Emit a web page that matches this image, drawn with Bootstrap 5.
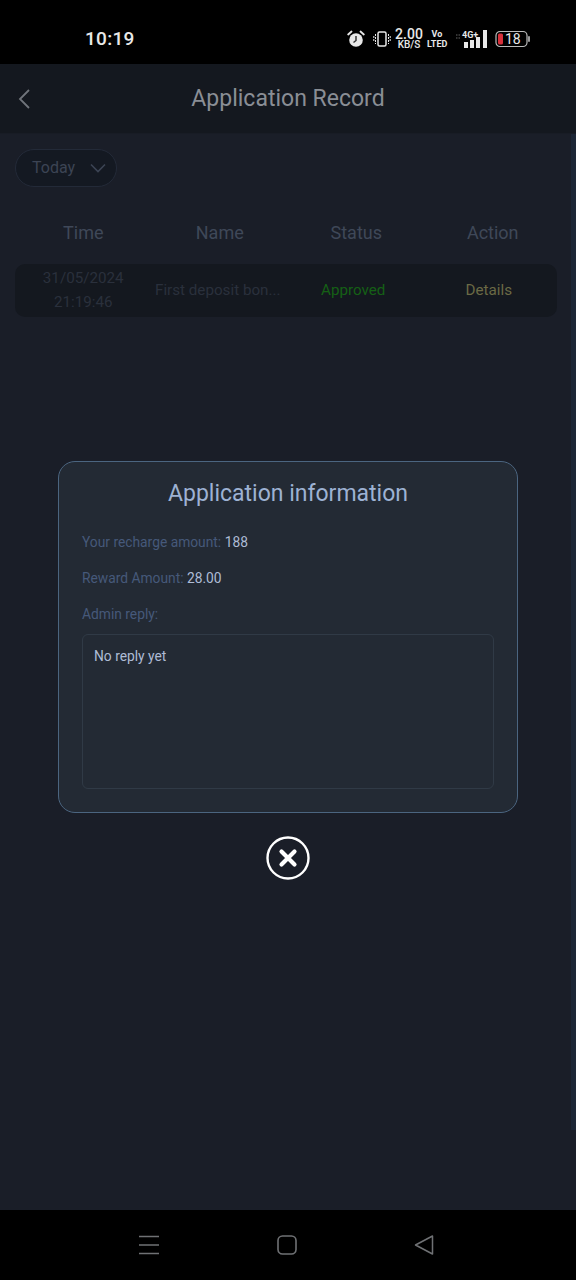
<!DOCTYPE html>
<html lang="en">
<head>
  <meta charset="UTF-8">
  <title>Application Record</title>
  <meta name="viewport" content="width=device-width, initial-scale=1">
  <link href="https://cdn.jsdelivr.net/npm/bootstrap@5.3.3/dist/css/bootstrap.min.css" rel="stylesheet">
  <style>
    body {
      font-family: Roboto, "Liberation Sans", sans-serif;
      background-color: #1a1e28;
      width: 576px;
      height: 1280px;
      overflow: hidden;
    }

    .phone-page {
      height: 1280px;
      position: relative;
    }

    .status-bar {
      height: 64px;
      background-color: #000;
      color: #e8e8e8;
      padding: 14px 45px 0 85px;
    }

    .status-time {
      font-size: 19px;
      font-weight: 500;
      letter-spacing: .3px;
    }

    .alarm-icon {
      margin-right: 8px;
    }

    .status-speed {
      width: 28px;
      margin: 0 4px;
      font-size: 14px;
      line-height: 11px;
      font-weight: 500;
      text-align: center;
      white-space: nowrap;
    }

    .status-speed span {
      display: block;
      font-size: 10px;
      line-height: 10px;
    }

    .status-volte {
      width: 20px;
      margin-right: 9px;
      font-size: 9px;
      line-height: 10px;
      font-weight: 700;
      text-align: center;
      white-space: nowrap;
    }

    .signal-icon {
      margin-right: 8px;
    }

    .app-header {
      height: 70px;
      background-color: #14181f;
      border-bottom: 1px solid #181c25;
      padding: 0 17px;
    }

    .app-title {
      flex: 1;
      text-align: center;
      color: #8a8e95;
      font-size: 23px;
      margin: 0 0 0 -14px;
      font-weight: 400;
    }

    .record-main {
      flex: 1;
      padding: 15px 19px 0 15px;
      position: relative;
    }

    .scroll-strip {
      position: absolute;
      top: 0;
      right: 0;
      width: 5px;
      height: 996px;
      background-color: #1c2636;
    }

    .date-pill {
      width: 102px;
      height: 38px;
      border: 1px solid #232a38;
      border-radius: 19px;
      background-color: #141922;
      color: #3c4454;
      font-size: 16px;
      padding-left: 16px;
      gap: 14px;
    }

    .head-row {
      margin: 19px 0 6px;
      height: 52px;
      color: #3f4858;
      font-size: 18px;
    }

    .cell-col {
      flex: none;
      width: 136.5px;
      text-align: center;
    }

    .data-row {
      height: 53px;
      padding-bottom: 2px;
      background-color: #14181f;
      border-radius: 10px;
      font-size: 15.2px;
      line-height: 24px;
    }

    .cell-time { color: #2a303c; }
    .cell-name { color: #2a303c; margin-left: -2px; }
    .cell-ok { color: #156015; margin-left: -1px; }
    .cell-link { color: #6b6a45; margin-left: -1px; }

    .info-dialog {
      position: absolute;
      left: 58px;
      top: 461px;
      width: 460px;
      height: 352px;
      background-color: #232a34;
      border: 1.5px solid #4b6580;
      border-radius: 17px;
      padding: 16px 23px 0;
    }

    .dialog-title {
      color: #9db2d3;
      font-size: 23px;
      font-weight: 400;
      text-align: center;
      line-height: 32px;
      margin-bottom: 22px;
    }

    .info-line {
      font-size: 13.8px;
      line-height: 20px;
      margin-bottom: 16px;
      color: #46597a;
    }

    .info-line b {
      font-weight: 400;
      color: #aebcd6;
    }

    .reply-box {
      height: 155px;
      margin-top: -6px;
      border: 1px solid #303a46;
      border-radius: 6px;
      padding: 11px;
      font-size: 13.8px;
      line-height: 20px;
      color: #aebcd6;
    }

    .dialog-close {
      position: absolute;
      left: 266px;
      top: 836px;
      width: 44px;
      height: 44px;
      padding: 0;
      background: none;
      border: 0;
    }

    .nav-bar {
      height: 70px;
      background-color: #000;
    }
  </style>
</head>
<body>

<div class="phone-page d-flex flex-column">

  <!-- Status bar -->
  <div class="status-bar d-flex align-items-center justify-content-between">
    <div class="status-time">10:19</div>
    <div class="d-flex align-items-center">
      <svg class="alarm-icon" width="18" height="18" viewBox="0 0 18 18">
        <circle cx="9" cy="10" r="6.8" fill="#e8e8e8"/>
        <path d="M9 6V10.5L6.5 12.5" fill="none" stroke="#333" stroke-width="1.5"/>
        <path d="M1.2 4.5L4.5 1.5M16.8 4.5L13.5 1.5" stroke="#e8e8e8" stroke-width="1.8" stroke-linecap="round"/>
      </svg>
      <svg width="18" height="18" viewBox="0 0 18 18">
        <rect x="5" y="2" width="8" height="14" rx="1.5" fill="none" stroke="#e8e8e8" stroke-width="1.5"/>
        <path d="M2.5 4v10M15.5 4v10M.8 6v6M17.2 6v6" stroke="#e8e8e8" stroke-width="1" stroke-dasharray="2 1"/>
      </svg>
      <div class="status-speed">2.00<span>KB/S</span></div>
      <div class="status-volte">Vo<br>LTED</div>
      <svg class="signal-icon" width="31" height="20" viewBox="0 0 31 20">
        <path d="M0 6H4M0 9H4" stroke="#666" stroke-width="1.2" stroke-dasharray="1.5 1"/>
        <rect x="8" y="13" width="4" height="6" fill="#e8e8e8"/>
        <rect x="14" y="11" width="4" height="8" fill="#e8e8e8"/>
        <rect x="20" y="8" width="4" height="11" fill="#e8e8e8"/>
        <rect x="27" y="1" width="4" height="18" fill="#e8e8e8"/>
        <text x="6" y="9" font-size="9" font-weight="700" fill="#e8e8e8" font-family="Roboto">4G+</text>
      </svg>
      <svg width="36" height="18" viewBox="0 0 36 18">
        <rect x="1" y="1.5" width="31" height="15" rx="4" fill="none" stroke="#bbb" stroke-width="1.2"/>
        <rect x="3" y="3.5" width="5" height="11" rx="1.5" fill="#d8303a"/>
        <rect x="33" y="6" width="2" height="6" rx="1" fill="#999"/>
        <text x="10" y="14" font-size="14" fill="#e8e8e8" font-family="Roboto">18</text>
      </svg>
    </div>
  </div>

  <!-- Header -->
  <div class="app-header d-flex align-items-center">
    <svg width="14" height="22" viewBox="0 0 14 22">
      <path d="M12 2L3 11L12 20" fill="none" stroke="#70747b" stroke-width="1.8"/>
    </svg>
    <h1 class="app-title">Application Record</h1>
  </div>

  <!-- Records -->
  <div class="record-main">
    <div class="scroll-strip"></div>
    <div class="date-pill d-flex align-items-center">
      <span>Today</span>
      <svg width="18" height="10" viewBox="0 0 18 10">
        <path d="M2 1.5L9 8.5L16 1.5" fill="none" stroke="#3c4454" stroke-width="1.6"/>
      </svg>
    </div>
    <div class="head-row d-flex align-items-center">
      <div class="cell-col">Time</div>
      <div class="cell-col">Name</div>
      <div class="cell-col">Status</div>
      <div class="cell-col">Action</div>
    </div>
    <div class="data-row d-flex align-items-center">
      <div class="cell-col cell-time">31/05/2024<br>21:19:46</div>
      <div class="cell-col cell-name">First deposit bon...</div>
      <div class="cell-col cell-ok">Approved</div>
      <div class="cell-col cell-link">Details</div>
    </div>
  </div>

  <!-- Bottom nav -->
  <div class="nav-bar d-flex align-items-center">
    <svg width="20" height="20" viewBox="0 0 20 20" style="margin-left:139px">
      <path d="M0 1.5H20M0 10H20M0 18.5H20" stroke="#6f7174" stroke-width="1.6"/>
    </svg>
    <svg width="20" height="20" viewBox="0 0 20 20" style="margin-left:118px">
      <rect x="1" y="1" width="18" height="18" rx="4.5" fill="none" stroke="#6f7174" stroke-width="1.6"/>
    </svg>
    <svg width="20" height="20" viewBox="0 0 20 20" style="margin-left:117px">
      <path d="M18.5 1V19L1.5 10Z" fill="none" stroke="#6f7174" stroke-width="1.5" stroke-linejoin="round"/>
    </svg>
  </div>

  <!-- Dialog -->
  <div class="info-dialog">
    <h2 class="dialog-title">Application information</h2>
    <p class="info-line">Your recharge amount: <b>188</b></p>
    <p class="info-line">Reward Amount: <b>28.00</b></p>
    <p class="info-line">Admin reply:</p>
    <div class="reply-box">No reply yet</div>
  </div>
  <button class="dialog-close" type="button" aria-label="Close">
    <svg width="44" height="44" viewBox="0 0 44 44">
      <circle cx="22" cy="22" r="20.5" fill="none" stroke="#fff" stroke-width="2.4"/>
      <path d="M15.5 15.5L28.5 28.5M28.5 15.5L15.5 28.5" stroke="#fff" stroke-width="4.2" stroke-linecap="round"/>
    </svg>
  </button>
</div>

<script src="https://cdn.jsdelivr.net/npm/bootstrap@5.3.3/dist/js/bootstrap.bundle.min.js"></script>
</body>
</html>
